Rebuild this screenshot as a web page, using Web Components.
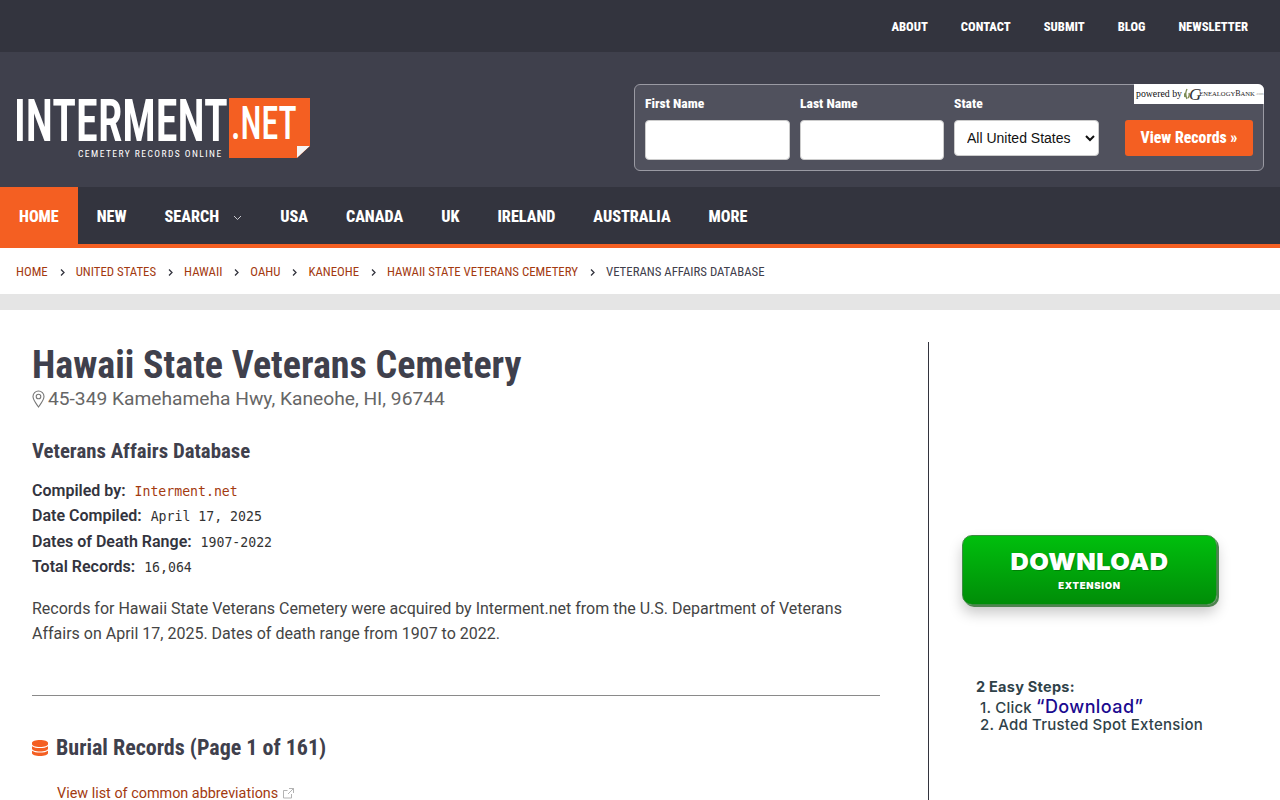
<!DOCTYPE html>
<html><head><meta charset="utf-8"><style>
html,body{margin:0;padding:0;background:#fff;height:800px;overflow:hidden;font-family:Roboto,sans-serif}
</style></head><body>
<site-topbar></site-topbar>
<site-header></site-header>
<site-nav></site-nav>
<site-crumbs></site-crumbs>
<site-main></site-main>
<script>
const def=(n,html)=>customElements.define(n,class extends HTMLElement{constructor(){super();this.attachShadow({mode:'open'}).innerHTML=html}});
const chev='<svg width="5" height="7" viewBox="0 0 5 7"><path d="M1 .5l3 3-3 3" fill="none" stroke="#33343e" stroke-width="1.300"/></svg>';
def('site-topbar',`<style>:host{display:flex;justify-content:flex-end;align-items:center;height:52px;background:#33343e;padding:2px 32px 0 0;gap:33px;box-sizing:border-box}
a{color:#fff;font:800 12.6px/1 Roboto,sans-serif;font-stretch:75%;text-transform:uppercase}</style>
<a>About</a><a>Contact</a><a>Submit</a><a>Blog</a><a>Newsletter</a>`);
def('site-logo',`<style>:host{display:block;width:300px;height:64px;position:relative}
.m{position:absolute;left:-2px;top:3px;font:600 59px/44px Roboto,sans-serif;font-stretch:75%;color:#fff;white-space:nowrap;transform:scaleX(.75);transform-origin:0 0}
.t{position:absolute;left:62px;top:53px;font:400 9.500px/10px Roboto,sans-serif;font-stretch:75%;letter-spacing:1.450px;color:#fff;white-space:nowrap}
.o{position:absolute;left:213px;top:2px;width:81px;height:60px;background:#f45f22;clip-path:polygon(0 0,100% 0,100% 48px,68px 100%,0 100%)}
.o b{position:absolute;left:2px;top:-3px;font:500 46px/56px Roboto,sans-serif;font-stretch:75%;color:#fff;transform:scaleX(.74);transform-origin:0 0}
.o svg{position:absolute;left:68px;top:48px}</style>
<span class="m">INTERMENT</span><span class="t">CEMETERY RECORDS ONLINE</span><div class="o"><b>.NET</b><svg width="13" height="12"><path d="M0 0H13L0 12z" fill="#f4f4f4"/></svg></div>`);
def('search-box',`<style>:host{display:grid;grid-template-columns:145px 144px 145px 1fr;column-gap:10px;width:630px;height:87px;box-sizing:border-box;border:1px solid #9a9aa3;border-radius:6px;background:#50515d;padding:0 10px;position:relative}
label{color:#fff;font:800 13.600px/1 Roboto,sans-serif;font-stretch:75%;display:block;padding-top:12px;height:35px;box-sizing:border-box}
input,select{display:block;width:100%;box-sizing:border-box;border:1px solid #ccc;border-radius:4px;background:#fff;margin:0}
input{height:40px}
select{height:36px;font:14px "Liberation Sans",Arial,sans-serif;color:#111;padding-left:8px}
button{grid-column:4;justify-self:end;align-self:start;margin-top:35px;width:128px;height:36px;border:0;border-radius:3px;background:#f45f22;color:#fff;font:800 15.800px/1 Roboto,sans-serif;font-stretch:75%;padding:0}
.gb{position:absolute;right:-1px;top:-1px;width:130px;height:20px;background:#fff;border-radius:0 6px 0 0;display:flex;align-items:center;padding-left:2px;box-sizing:border-box;color:#111;font:9.800px/1 "Liberation Serif",serif;white-space:nowrap}
.gb svg{margin:0 0 0 2px}.gb i{font-style:italic;font-size:17px;line-height:17px;margin:0 -2px 0 -1px;color:#333}.gb small{font-size:6.600px;letter-spacing:0;color:#222}.gb small b{font-weight:400;font-size:8px}.gb u{text-decoration:none;font-size:4px;color:#999;margin-left:1px}</style>
<div><label>First Name</label><input></div><div><label>Last Name</label><input></div><div><label>State</label><select><option>All United States</option></select></div>
<button>View Records »</button>
<div class="gb"><span>powered by</span><svg width="6" height="12" viewBox="0 0 6 12"><path d="M3 1C1.500 4 1.500 8 3 11M1.500 5C.5 6 .5 8 1 9M5 5c.5 2 0 4-1 5" fill="none" stroke="#7c8c55" stroke-width="1.400"/></svg><i>G</i><small>ENEALOGY<b>B</b>ANK</small><u>.com</u></div>`);
def('site-header',`<style>:host{display:flex;justify-content:space-between;align-items:flex-start;height:135px;background:#3f404c;padding:0 16px;box-sizing:border-box}
site-logo{margin-top:44px}search-box{margin-top:32px}</style><site-logo></site-logo><search-box></search-box>`);
def('site-nav',`<style>:host{display:flex;height:61px;background:#33343e;border-bottom:4px solid #f45f22;box-sizing:border-box}
a{color:#fff;font:800 16.150px/1 Roboto,sans-serif;font-stretch:75%;padding:0 19px;height:61px;box-sizing:border-box;text-transform:uppercase;display:flex;gap:14px;align-items:center}
a svg{margin-top:1px}
a.on{background:#f45f22}
</style><a class="on">Home</a><a>New</a><a>Search <svg width="9" height="6" viewBox="0 0 9 6"><path d="M1 1l3.500 3.500L8 1" fill="none" stroke="#c9c9cf" stroke-width="1"/></svg></a><a>USA</a><a>Canada</a><a>UK</a><a>Ireland</a><a>Australia</a><a>More</a>`);
def('site-crumbs',`<style>:host{display:flex;align-items:center;height:46px;padding:2px 0 0 16px;box-sizing:border-box;font:400 12.800px/1 Roboto,sans-serif;font-stretch:75%;text-transform:uppercase;color:#3f404c;white-space:nowrap}
a{color:#a33a10}svg{margin:0 11px 0 12px}</style>
<a>Home</a>${chev}<a>United States</a>${chev}<a>Hawaii</a>${chev}<a>Oahu</a>${chev}<a>Kaneohe</a>${chev}<a>Hawaii State Veterans Cemetery</a>${chev}<span>Veterans Affairs Database</span>`);
def('meta-row',`<style>:host{display:block;font:600 16px/25.400px Roboto,sans-serif;font-stretch:92%;color:#33343e}
::slotted(span:not([slot])){font:13.200px "DejaVu Sans Mono",monospace;font-stretch:100%;margin-left:5px;color:#333}</style><slot name="k"></slot> <slot></slot>`);
def('download-ad',`<style>:host{display:block}
.b{width:255px;height:70px;box-sizing:border-box;border-radius:10px;background:linear-gradient(#00bf0d,#008d08);border:1px solid #3d8a42;box-shadow:2px 2px 0 #4f8350,0 8px 14px rgba(0,0,0,.22);color:#fff;text-align:center;font-family:Inter,sans-serif;font-weight:900;text-shadow:1px 1px 0 rgba(0,60,0,.35)}
.d{font-size:23.500px;line-height:26px;padding-top:13px;letter-spacing:.4px;transform:scaleX(1.08)}.e{font-size:9.500px;line-height:12px;margin-top:5px;letter-spacing:.7px}
.s{margin:71px 0 0 14px;font:500 15px/18px Inter,sans-serif;letter-spacing:.2px;color:#2f4249}
.s b{font-weight:700;display:block;font-size:14.500px;line-height:22px;letter-spacing:.25px}
.s div{padding-left:4px;height:18px}.s em{font-style:normal;color:#1b0a8f;font-size:18px;font-weight:500;letter-spacing:.4px}</style>
<div class="b"><div class="d">DOWNLOAD</div><div class="e">EXTENSION</div></div>
<div class="s"><b>2 Easy Steps:</b><div>1. Click <em>“Download”</em></div><div>2. Add Trusted Spot Extension</div></div>`);
def('site-main',`<style>:host{display:block;border-top:16px solid #e5e5e5;padding:32px 0 0 32px;height:506px;box-sizing:border-box;overflow:hidden}
.g{display:flex}
.l{width:848px;flex:none;padding-right:48px}
.r{border-left:1px solid #33343e;padding:193px 0 0 33px;height:480px;box-sizing:border-box}
h1{margin:0;padding-top:1px;font:700 38px/44px Roboto,sans-serif;font-stretch:75%;color:#3f404c}
.addr{display:flex;align-items:center;gap:3px;font:400 19.200px/24px Roboto,sans-serif;color:#666;margin-bottom:0}
h2{margin:26px 0 13px;font:700 20.800px/28px Roboto,sans-serif;font-stretch:75%;color:#3f404c}
p{margin:16px 0 0;font:400 16px/25px Roboto,sans-serif;color:#444}
hr{border:0;border-top:1px solid #8a8a8a;margin:49px 0 36px}
h3{margin:0;display:flex;align-items:center;gap:8px;font:700 22px/32px Roboto,sans-serif;font-stretch:75%;color:#3f404c}
.ab{display:block;margin:22px 0 0 25px;font:400 14.400px/16px Roboto,sans-serif;color:#a33a10}
.ab svg{margin-left:1px;vertical-align:-1px}
</style><div class="g"><div class="l">
<h1>Hawaii State Veterans Cemetery</h1>
<div class="addr"><svg width="13" height="18" viewBox="0 0 13 18"><path d="M6.500 1A5.500 5.500 0 0 0 1 6.500c0 3.500 3.500 7.500 5.500 10.500 2-3 5.500-7 5.500-10.500A5.500 5.500 0 0 0 6.500 1z" fill="none" stroke="#777" stroke-width="1.100"/><circle cx="6.500" cy="6.500" r="2.300" fill="none" stroke="#777" stroke-width="1.100"/></svg>45-349 Kamehameha Hwy, Kaneohe, HI, 96744</div>
<h2>Veterans Affairs Database</h2>
<meta-row><span slot="k">Compiled by:</span><span style="color:#a33a10">Interment.net</span></meta-row>
<meta-row><span slot="k">Date Compiled:</span><span>April 17, 2025</span></meta-row>
<meta-row><span slot="k">Dates of Death Range:</span><span>1907-2022</span></meta-row>
<meta-row><span slot="k">Total Records:</span><span>16,064</span></meta-row>
<p>Records for Hawaii State Veterans Cemetery were acquired by Interment.net from the U.S. Department of Veterans Affairs on April 17, 2025. Dates of death range from 1907 to 2022.</p>
<hr>
<h3><svg width="16" height="16" viewBox="0 0 16 16"><path fill="#f45f22" d="M8 0c4.400 0 8 1.200 8 2.700v1.600C16 5.800 12.400 7 8 7S0 5.800 0 4.300V2.700C0 1.200 3.600 0 8 0zM0 6.200C1.700 7.500 4.800 8 8 8s6.300-.5 8-1.800v2.600C16 10.300 12.400 11.500 8 11.500S0 10.300 0 8.800zM0 10.700c1.700 1.300 4.800 1.800 8 1.800s6.300-.5 8-1.800v2.600C16 14.800 12.400 16 8 16s-8-1.200-8-2.700z"/></svg>Burial Records (Page 1 of 161)</h3>
<a class="ab">View list of common abbreviations <svg width="11" height="11" viewBox="0 0 11 11"><path d="M8.500 6v4h-8V2.500h4M6 .5h4.500V5M10.500 .5L5 6" fill="none" stroke="#aaa" stroke-width=".9"/></svg></a>
</div><div class="r"><download-ad></download-ad></div></div>`);
</script></body></html>
